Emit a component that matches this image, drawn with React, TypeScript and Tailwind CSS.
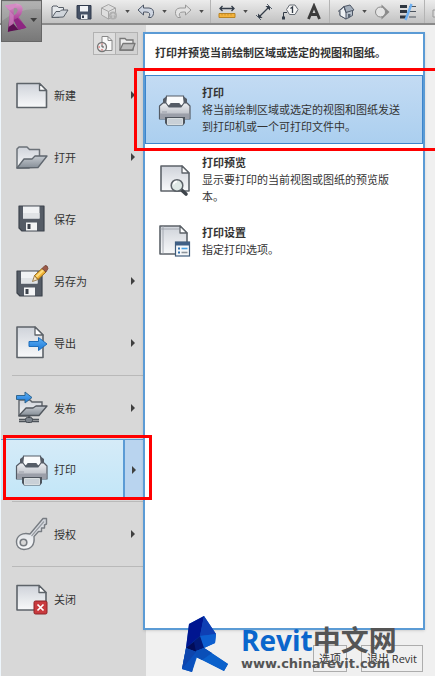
import React from "react";

const Page = ({ d, fold }: { d: string; fold: string }) => (
  <>
    <path d={d} fill="url(#paper)" stroke="#5d6369" strokeWidth="1.6" strokeLinejoin="round" />
    <path d={fold} fill="#fff" stroke="#5d6369" strokeWidth="1.3" strokeLinejoin="round" />
  </>
);

const Icon = ({ children }: { children: React.ReactNode }) => (
  <svg viewBox="0 0 34 34" className="size-[34px] shrink-0" aria-hidden="true">
    {children}
  </svg>
);

const Defs = () => (
  <svg className="absolute size-0" aria-hidden="true">
    <defs>
      <linearGradient id="paper" x1="0" y1="0" x2="0" y2="1">
        <stop offset="0" stopColor="#cfd3da" />
        <stop offset="1" stopColor="#f8f9fa" />
      </linearGradient>
      <linearGradient id="steel" x1="0" y1="0" x2="0" y2="1">
        <stop offset="0" stopColor="#c5cad0" />
        <stop offset="1" stopColor="#868e97" />
      </linearGradient>
      <linearGradient id="body" x1="0" y1="0" x2="0" y2="1">
        <stop offset="0" stopColor="#eef0f3" />
        <stop offset="1" stopColor="#a9adb6" />
      </linearGradient>
      <linearGradient id="magenta" x1="0" y1="0" x2="0" y2="1">
        <stop offset="0" stopColor="#dc9ccc" />
        <stop offset="0.5" stopColor="#b0479d" />
        <stop offset="1" stopColor="#6e1560" />
      </linearGradient>
      <linearGradient id="azure" x1="0" y1="0" x2="0" y2="1">
        <stop offset="0" stopColor="#5db0f5" />
        <stop offset="1" stopColor="#1b78d8" />
      </linearGradient>
    </defs>
  </svg>
);

const NewIcon = () => (
  <Icon>
    <Page d="M2 5.500H24.500L31.500 12.500V29.500H2Z" fold="M24.500 5.500V12.500H31.500Z" />
  </Icon>
);

const OpenIcon = () => (
  <Icon>
    <path d="M2 28V9L4 7H12L14.500 9.500H24.500V17L14 28Z" fill="url(#paper)" stroke="#6b7178" strokeWidth="1.500" strokeLinejoin="round" />
    <path d="M2 28L9 19H17L20 16H32L23 27.500Z" fill="url(#steel)" stroke="#5f666e" strokeWidth="1.300" strokeLinejoin="round" />
  </Icon>
);

const Floppy = () => (
  <>
    <path d="M1 1H26V26H4L1 23Z" fill="#555c66" stroke="#3d434c" strokeWidth="1.200" strokeLinejoin="round" />
    <rect x="5" y="1.500" width="16.500" height="12" fill="#f0f2f4" />
    <path d="M5 8H21.500V13.500H5Z" fill="#e0e3e6" />
    <rect x="8" y="17.500" width="11" height="8" fill="#f4f5f6" />
    <rect x="9.500" y="19" width="3" height="5" fill="#3d434c" />
  </>
);

const SaveIcon = () => (
  <Icon>
    <g transform="translate(3 3)"><Floppy /></g>
  </Icon>
);

const SaveAsIcon = () => (
  <Icon>
    <g transform="translate(1 6)"><Floppy /></g>
    <path d="M17.500 17.500L19.500 11.500L23 15.500Z" fill="#f7e3bf" stroke="#8a6a35" strokeWidth="0.800" />
    <path d="M19.500 11.500L27 4.500L31 8L23 15.500Z" fill="#f2b335" stroke="#94691d" strokeWidth="1" />
    <path d="M20.500 12L28 5L29.500 6.500L22 13.500Z" fill="#fddc7d" />
    <path d="M27 4.500L30 1.500Q32.500 1 33 4.500L31 8Z" fill="#9b5a48" stroke="#6f4033" strokeWidth="0.800" />
  </Icon>
);

const ExportIcon = () => (
  <Icon>
    <Page d="M2 1H20L28 9V31.500H2Z" fold="M20 1V9H28Z" />
    <path d="M14 15.500H23.500V11.500L32 18L23.500 24.500V20.500H14Z" fill="url(#azure)" stroke="#1d6dbb" strokeWidth="1" />
  </Icon>
);

const PublishIcon = () => (
  <Icon>
    <path d="M4 25V9H15L17 11H27V17L15 25Z" fill="url(#paper)" stroke="#5d6369" strokeWidth="1.400" />
    <path d="M4 24.500L11 17H18L21 15H32L24 24.500Z" fill="url(#steel)" stroke="#50565d" strokeWidth="1.300" strokeLinejoin="round" />
    <path d="M14 24V27M4 28.500H24M4 30.500H24" stroke="#4e545b" strokeWidth="1.300" />
    <rect x="10.500" y="26.500" width="7" height="5" rx="2" fill="#7c838b" stroke="#454b52" />
    <path d="M1.500 4.500H10V1L17 6.500L10 12V8.500H1.500Z" fill="url(#azure)" stroke="#31668f" strokeWidth="1" />
  </Icon>
);

const PrintIcon = () => (
  <Icon>
    <path d="M5 14V6L9 3H25L29 6V14Z" fill="#555c66" />
    <path d="M7.500 12L8.500 3H25.500L26.500 12L23 13L21 10.500H13L11 13Z" fill="#fafbfc" stroke="#555c66" strokeWidth="1.200" />
    <path d="M1.500 13L5 10H8L11 14H23L26 10H29L32 13V26H1.500Z" fill="url(#body)" stroke="#555c66" strokeWidth="1.200" strokeLinejoin="round" />
    <path d="M2 20.500H31.500V26H2Z" fill="#9b9fa9" />
    <path d="M4 19H9" stroke="#9b9fa9" />
    <path d="M7 24H27V30L25 32.500H9L7 30Z" fill="#4d545d" />
    <path d="M9.500 25.500H24.500V31.500H9.500Z" fill="#c9d0d7" stroke="#eef1f3" strokeWidth="0.800" />
  </Icon>
);

const KeyIcon = () => (
  <Icon>
    <path
      d="M15 17L28 1.500H31.500V7L29.500 8V11H26.500V14.500H23.500L19 19.500C20 28 16 32.500 9 32.500C4 32.500 1.500 29 1.500 25C1.500 19 7 15 15 17Z"
      fill="url(#paper)" stroke="#777c82" strokeWidth="1.400" strokeLinejoin="round"
    />
    <path d="M16.500 19L29 4.500" stroke="#979ca2" strokeWidth="1.200" />
    <circle cx="8.500" cy="25.500" r="3.300" fill="#d8d8d8" stroke="#777c82" strokeWidth="1.600" />
  </Icon>
);

const CloseIcon = () => (
  <Icon>
    <Page d="M2 3.500H24L31 10.500V28H2Z" fold="M24 3.500V10.500H31Z" />
    <rect x="19" y="19" width="13" height="13" rx="1.500" fill="#c93a3e" stroke="#8e2226" />
    <path d="M22.500 22.500L28.500 28.500M28.500 22.500L22.500 28.500" stroke="#fff" strokeWidth="1.700" />
  </Icon>
);

const PreviewIcon = () => (
  <Icon>
    <Page d="M3 3H24L31 10V28H3Z" fold="M24 3V10H31Z" />
    <path d="M23 26.500L28 31" stroke="#3e444b" strokeWidth="3.600" strokeLinecap="round" />
    <circle cx="19" cy="22.500" r="5.800" fill="#dfe9e6" stroke="#5c6268" strokeWidth="1.500" />
    <path d="M15.500 21.500A4 4 0 0 1 19 18.500" stroke="#fff" strokeWidth="1.300" fill="none" />
  </Icon>
);

const SetupIcon = () => (
  <Icon>
    <Page d="M2 2H22L29 9V30H2Z" fold="M22 2V9H29Z" />
    <path d="M5 2V30M2 5H21" stroke="#9ba0a7" strokeWidth="0.800" />
    <rect x="17.500" y="18" width="14" height="14" fill="#f6f8fa" stroke="#3f5b7a" strokeWidth="1.200" />
    <path d="M17.500 18H31.500V21.500H17.500Z" fill="#3f5f85" />
    <path d="M20 24.500H22M20 28.500H22" stroke="#2f6fae" strokeWidth="2" />
    <path d="M23.500 24.500H29.500" stroke="#43a0e6" strokeWidth="1.600" />
    <path d="M23.500 28.500H29.500" stroke="#8c939b" strokeWidth="1.600" />
  </Icon>
);

const Tool = ({ label, width, children }: { label: string; width: string; children: React.ReactNode }) => (
  <button type="button" aria-label={label} className={`flex h-full shrink-0 items-center justify-center ${width}`}>
    <svg viewBox="0 0 18 18" className="size-[18px] shrink-0" fill="none">{children}</svg>
  </button>
);

const Caret = ({ label }: { label: string }) => (
  <button type="button" aria-label={label} className="flex h-full w-[10px] shrink-0 items-center justify-center">
    <svg viewBox="0 0 6 4" className="h-[3px] w-[5px]"><path d="M0 0H6L3 4Z" fill="#4c4c4c" /></svg>
  </button>
);

const Divider = () => (
  <span className="flex h-full w-2 shrink-0 justify-center"><span className="h-full w-px bg-[#b4b4b4]" /></span>
);

const Toolbar = () => (
  <header className="relative flex h-[25px] w-full shrink-0 items-center overflow-hidden border-b-2 border-[#8a8a8a] bg-linear-to-b from-[#ececec] to-[#c2c2c2] pl-12">
    <Tool label="打开" width="w-6">
      <path d="M1 14.500V4L2 3H6L7.500 4.500H12.500V7.500L8 14.500Z" fill="#e6e9ec" stroke="#565d66" />
      <path d="M1 14.500L5 8.500H9L10.500 7H17L12.500 14Z" fill="#d0d5db" stroke="#565d66" strokeLinejoin="round" />
    </Tool>
    <Tool label="保存" width="w-6">
      <path d="M2 2.500H16V16H3.500L2 14.500Z" fill="#465266" stroke="#303a4c" />
      <path d="M5 3H13V8.500H5Z" fill="#f0f2f5" />
      <path d="M6 11.500H12.500V16H6Z" fill="#eef0f3" />
      <path d="M7 12.500H9V15H7Z" fill="#303a4c" />
    </Tool>
    <Tool label="同步" width="w-[26px]">
      <path d="M1.500 5L8.500 1.500L15.500 5V12L8.500 16L1.500 12Z" fill="#dedede" stroke="#a5a5a5" />
      <path d="M1.500 5L8.500 8.500L15.500 5M8.500 8.500V16" stroke="#a5a5a5" />
      <circle cx="13" cy="12.500" r="4" fill="#b0b0b0" />
      <path d="M11 12.500L13 10.500L15 12.500M13 11V15" stroke="#dadada" />
    </Tool>
    <Caret label="同步选项" />
    <Tool label="放弃" width="w-[27px]">
      <path d="M1 7L6.500 2V5H12Q17 5.500 16.500 10.500Q16.500 13 14 14.500H11.500Q13.500 12 12.500 10.500Q12 9 9 9H6.500V12Z" fill="#cfd6e2" stroke="#4e5766" strokeLinejoin="round" />
    </Tool>
    <Caret label="放弃选项" />
    <Tool label="重做" width="w-[27px]">
      <path d="M17 7L11.500 2V5H6Q1 5.500 1.500 10.500Q1.500 13 4 14.500H6.500Q4.500 12 5.500 10.500Q6 9 9 9H11.500V12Z" fill="#e3e3e3" stroke="#999" strokeLinejoin="round" />
    </Tool>
    <Caret label="重做选项" />
    <Divider />
    <Tool label="测量" width="w-[26px]">
      <path d="M2 5.500H16M4.500 3L2 5.500L4.500 8M13.500 3L16 5.500L13.500 8" stroke="#333c48" strokeWidth="1.300" />
      <path d="M1 10.500H17V14.500H1Z" fill="#f4b33c" stroke="#b98424" />
      <path d="M4 11V12.500M7 11V12.500M10 11V12.500M13 11V12.500" stroke="#b98424" strokeWidth="0.700" />
    </Tool>
    <Caret label="测量选项" />
    <Tool label="对齐尺寸标注" width="w-7">
      <path d="M3.500 14.500L14.500 3.500" stroke="#333c48" strokeWidth="1.200" />
      <path d="M3 15V10.500L7.500 15ZM15 3V7.500L10.500 3Z" fill="#333c48" />
      <path d="M1 12L6 17M12 1L17 6" stroke="#56606c" />
    </Tool>
    <Tool label="按类别标记" width="w-6">
      <path d="M2.500 15V9.500H6" stroke="#333c48" />
      <path d="M1 13.500H4V16.500H1Z" fill="#333c48" />
      <path d="M8.500 2H14L17 6.500L14 11.500H8.500L5.500 6.500Z" fill="#f4f4f4" stroke="#676d75" />
      <path d="M9.500 5.500L11.500 4V10" stroke="#333c48" strokeWidth="1.300" />
    </Tool>
    <Tool label="文字" width="w-[23px]">
      <path d="M3.500 16L9 3L14.500 16M6 11.500H12" stroke="#3c3c3c" strokeWidth="2.800" />
    </Tool>
    <Divider />
    <Tool label="默认三维视图" width="w-[26px]">
      <path d="M3 8V12.500L9 16L15.500 12.500V7" fill="#b8c1cc" stroke="#4e5766" />
      <path d="M3 7.500L7 3.500L9 9V16L3 12.500Z" fill="#edf0f3" stroke="#4e5766" />
      <path d="M7 3.500L13 2L17 7L9 9.500Z" fill="#a3aebb" stroke="#4e5766" strokeLinejoin="round" />
      <path d="M1 8.500L7 3.500L9 9.500" stroke="#4e5766" />
      <path d="M11 11H13.500V14L11 15.500Z" fill="#5b6675" />
    </Tool>
    <Caret label="三维视图选项" />
    <Tool label="剖面" width="w-[26px]">
      <path d="M8.500 1.500L16.500 9L8.500 16.500Z" fill="#8a8a8a" />
      <circle cx="7.500" cy="9" r="5" fill="#e4e4e4" stroke="#8a8a8a" />
    </Tool>
    <Tool label="细线" width="w-[25px]">
      <path d="M1 3.500H8M1 8.500H8M1 14H8" stroke="#2e3640" strokeWidth="3" />
      <path d="M10 3.500H17M10 8.500H17M10 14H17" stroke="#4c545e" strokeWidth="1.200" />
      <path d="M12.500 1L6.500 17" stroke="#6db0f2" strokeWidth="2.400" />
    </Tool>
    <Divider />
    <Tool label="打印机" width="w-6">
      <path d="M5 8V3H13V8M2 7H16V14H2Z" fill="#ddd" stroke="#999" />
    </Tool>
  </header>
);

const RightArrow = () => (
  <svg viewBox="0 0 4 8" className="h-2 w-1" aria-hidden="true"><path d="M0 0L4 4L0 8Z" fill="#404040" /></svg>
);

const MenuRow = ({ icon, label, more }: { icon: React.ReactNode; label: string; more?: boolean }) => (
  <li className="flex h-[62px]">
    <button type="button" className="flex flex-1 items-center gap-[5px] pl-[14px]">
      {icon}
      <span>{label}</span>
    </button>
    {more && (
      <button type="button" aria-label={`${label} 更多`} className="flex w-5 items-center justify-center"><RightArrow /></button>
    )}
  </li>
);

const Rule = () => <li role="separator" className="my-px ml-[11px] h-px bg-[#b9b9b9]" />;

const Sidebar = () => (
  <aside className="w-[146px] shrink-0 border-l border-[#eef6fc] bg-[#d8d8d8] pt-[7px] pr-[3px]">
    <div className="mr-[5px] flex justify-end">
      <button type="button" aria-label="最近使用的文档" className="flex h-[23px] w-[23px] items-center justify-center border border-[#b2b2b2] bg-[#dedede]">
        <svg viewBox="0 0 18 18" className="size-[18px]" fill="none">
          <path d="M6 1.500H12L16 5.500V15.500H6Z" fill="#fafafa" stroke="#888" />
          <path d="M12 1.500V5.500H16" stroke="#888" />
          <circle cx="6" cy="12" r="4.500" fill="#eee" stroke="#777" strokeWidth="1.300" />
          <path d="M6 9.500V12H8" stroke="#555" />
          <path d="M2.500 12H4M6 15.500V14M6 8.500V9.500" stroke="#d44" />
        </svg>
      </button>
      <button type="button" aria-label="打开的文档" className="flex h-[23px] w-[22px] items-center justify-center border border-l-0 border-[#b2b2b2] bg-[#d2d2d2]">
        <svg viewBox="0 0 18 18" className="size-[18px]" fill="none">
          <path d="M2 15V3.500H7L8.500 5H15V15Z" fill="#eee" stroke="#777" strokeWidth="1.300" />
          <path d="M2 15L5 8.500H17L14.500 15Z" fill="#bcbcbc" stroke="#777" strokeWidth="1.300" strokeLinejoin="round" />
        </svg>
      </button>
    </div>
    <ul className="mt-[9px]">
      <MenuRow icon={<NewIcon />} label="新建" more />
      <MenuRow icon={<OpenIcon />} label="打开" more />
      <MenuRow icon={<SaveIcon />} label="保存" />
      <MenuRow icon={<SaveAsIcon />} label="另存为" more />
      <MenuRow icon={<ExportIcon />} label="导出" more />
      <Rule />
      <MenuRow icon={<PublishIcon />} label="发布" more />
      <li className="relative mb-0.5 flex h-[60px]">
        <button type="button" className="flex flex-1 items-center gap-[5px] border-t border-[#5b9bd5] bg-linear-to-b from-[#d5ebf8] to-[#c2e6f8] pl-[14px]">
          <PrintIcon />
          <span>打印</span>
        </button>
        <button type="button" aria-label="打印 更多" className="flex w-5 items-center justify-center border-t border-l-2 border-[#5b9bd5] bg-[#b9d4ef]"><RightArrow /></button>
        <span className="pointer-events-none absolute -top-1 -right-[9px] -bottom-px left-[2px] z-20 border-3 border-[#ff0000]" />
      </li>
      <Rule />
      <MenuRow icon={<KeyIcon />} label="授权" more />
      <Rule />
      <MenuRow icon={<CloseIcon />} label="关闭" />
    </ul>
  </aside>
);

const PanelItem = ({ icon, title, text, active }: { icon: React.ReactNode; title: string; text: string; active?: boolean }) => (
  <li className="relative">
    <button
      type="button"
      className={`flex w-full items-center gap-[10px] border py-2 pr-4 pl-3 text-left ${active ? "border-[#3d85cc] bg-linear-to-b from-[#c3dbf3] to-[#abcfef]" : "border-transparent"}`}
    >
      {icon}
      <span className="flex flex-1 flex-col">
        <strong className="font-bold">{title}</strong>
        <span>{text}</span>
      </span>
    </button>
    {active && <span className="pointer-events-none absolute -top-[7px] -right-5 -bottom-[7px] -left-[11px] border-3 border-[#ff0000]" />}
  </li>
);

const Watermark = () => (
  <div className="pointer-events-none absolute right-[38px] bottom-[3px] z-30 flex items-end gap-[13px]">
    <svg viewBox="0 0 46 57" className="h-[57px] w-[46px]" aria-hidden="true">
      <path d="M7 8L22 0L34 18L33 27L22 32L46 48L42 55L15 41L10 56L0 53L4 32Z" fill="#0b5cc4" />
      <path d="M7 8L22 0L18 20L4 32Z" fill="#001590" />
      <path d="M22 0L34 18L18 20Z" fill="#0f3fb4" />
      <path d="M34 18L33 27L22 32L18 20Z" fill="#0d5fd0" />
      <path d="M4 32L18 20L22 32L14 36Z" fill="#021a78" />
      <path d="M4 32L12 26L14 36Z" fill="#020c58" />
      <path d="M4 32L15 36L10 56L0 53Z" fill="#0a50bd" />
      <path d="M4 32L14 36L0 53Z" fill="#0d45ad" />
      <path d="M14 35L22 32L46 48L42 55L14 41Z" fill="#0b61cb" />
      <path d="M14 35L22 32L30 37L20 44L14 41Z" fill="#0a4fb8" />
    </svg>
    <div className="flex w-[156px] flex-col font-['Open_Sans','Noto_Sans_CJK_SC',sans-serif] font-bold whitespace-nowrap text-[#555]">
      <p className="text-[28px] leading-[30px]">
        <span className="text-[#0a66cc]">Revit</span>中文网
      </p>
      <p className="font-['DejaVu_Sans',sans-serif] text-[13px] leading-[18px]">www.chinarevit.com</p>
    </div>
  </div>
);

export default function App() {
  return (
    <div className="relative flex min-h-screen w-full flex-col overflow-hidden bg-[#f0f0f0] font-['Open_Sans','Noto_Sans_CJK_SC',sans-serif] text-[11px] leading-[17px] text-[#333]">
      <Defs />
      <Toolbar />
      <button type="button" aria-label="应用程序菜单" className="absolute top-0 left-px z-10 flex h-[42px] w-[41px] items-center border border-[#666] bg-linear-to-b from-[#a5a5a5] to-[#787878]">
        <svg viewBox="0 0 40 40" className="size-10" aria-hidden="true">
          <path d="M0 20Q18 6 40 8V0H0Z" fill="#fff" opacity="0.150" />
          <path d="M3 4L15 2Q22 3 21 9Q20 14 17 16L25 27L17 29L12 19V29L6 31L8 10Z" fill="url(#magenta)" />
          <path d="M12 7Q16 6 16 9Q15 13 12 14Z" fill="#959595" />
          <path d="M3 4L8 9L12 7L15 2Z" fill="#d48ac4" />
          <path d="M8 10L12 14V22L7 27Z" fill="#cf86c0" opacity="0.700" />
          <path d="M16 17L25 27L17 29L12 19Z" fill="#8e2682" />
          <path d="M7 26L12 23L17 29L6 31Z" fill="#5c1053" />
          <path d="M29 17H36L32.500 21Z" fill="#3f3f3f" />
        </svg>
      </button>
      <div className="flex flex-1">
        <Sidebar />
        <main className="relative z-10 mt-[7px] mr-[10px] -ml-[3px] flex min-w-0 flex-1 flex-col">
          <section className="flex-1 border-2 border-[#5b9bd5] bg-white shadow-sm">
            <h1 className="h-[41px] overflow-visible pt-[10px] pl-[10px] font-bold whitespace-nowrap">打印并预览当前绘制区域或选定的视图和图纸。</h1>
            <ul className="flex flex-col gap-px">
              <PanelItem active icon={<PrintIcon />} title="打印" text="将当前绘制区域或选定的视图和图纸发送到打印机或一个可打印文件中。" />
              <PanelItem icon={<PreviewIcon />} title="打印预览" text="显示要打印的当前视图或图纸的预览版本。" />
              <PanelItem icon={<SetupIcon />} title="打印设置" text="指定打印选项。" />
            </ul>
          </section>
          <footer className="flex h-[46px] items-end justify-end gap-[14px] pr-[2px] pb-1">
            <button type="button" className="h-[27px] border border-[#adadad] px-[5px] whitespace-nowrap">选项</button>
            <button type="button" className="h-[27px] border border-[#adadad] px-[5px] whitespace-nowrap">退出 Revit</button>
          </footer>
        </main>
      </div>
      <Watermark />
    </div>
  );
}
